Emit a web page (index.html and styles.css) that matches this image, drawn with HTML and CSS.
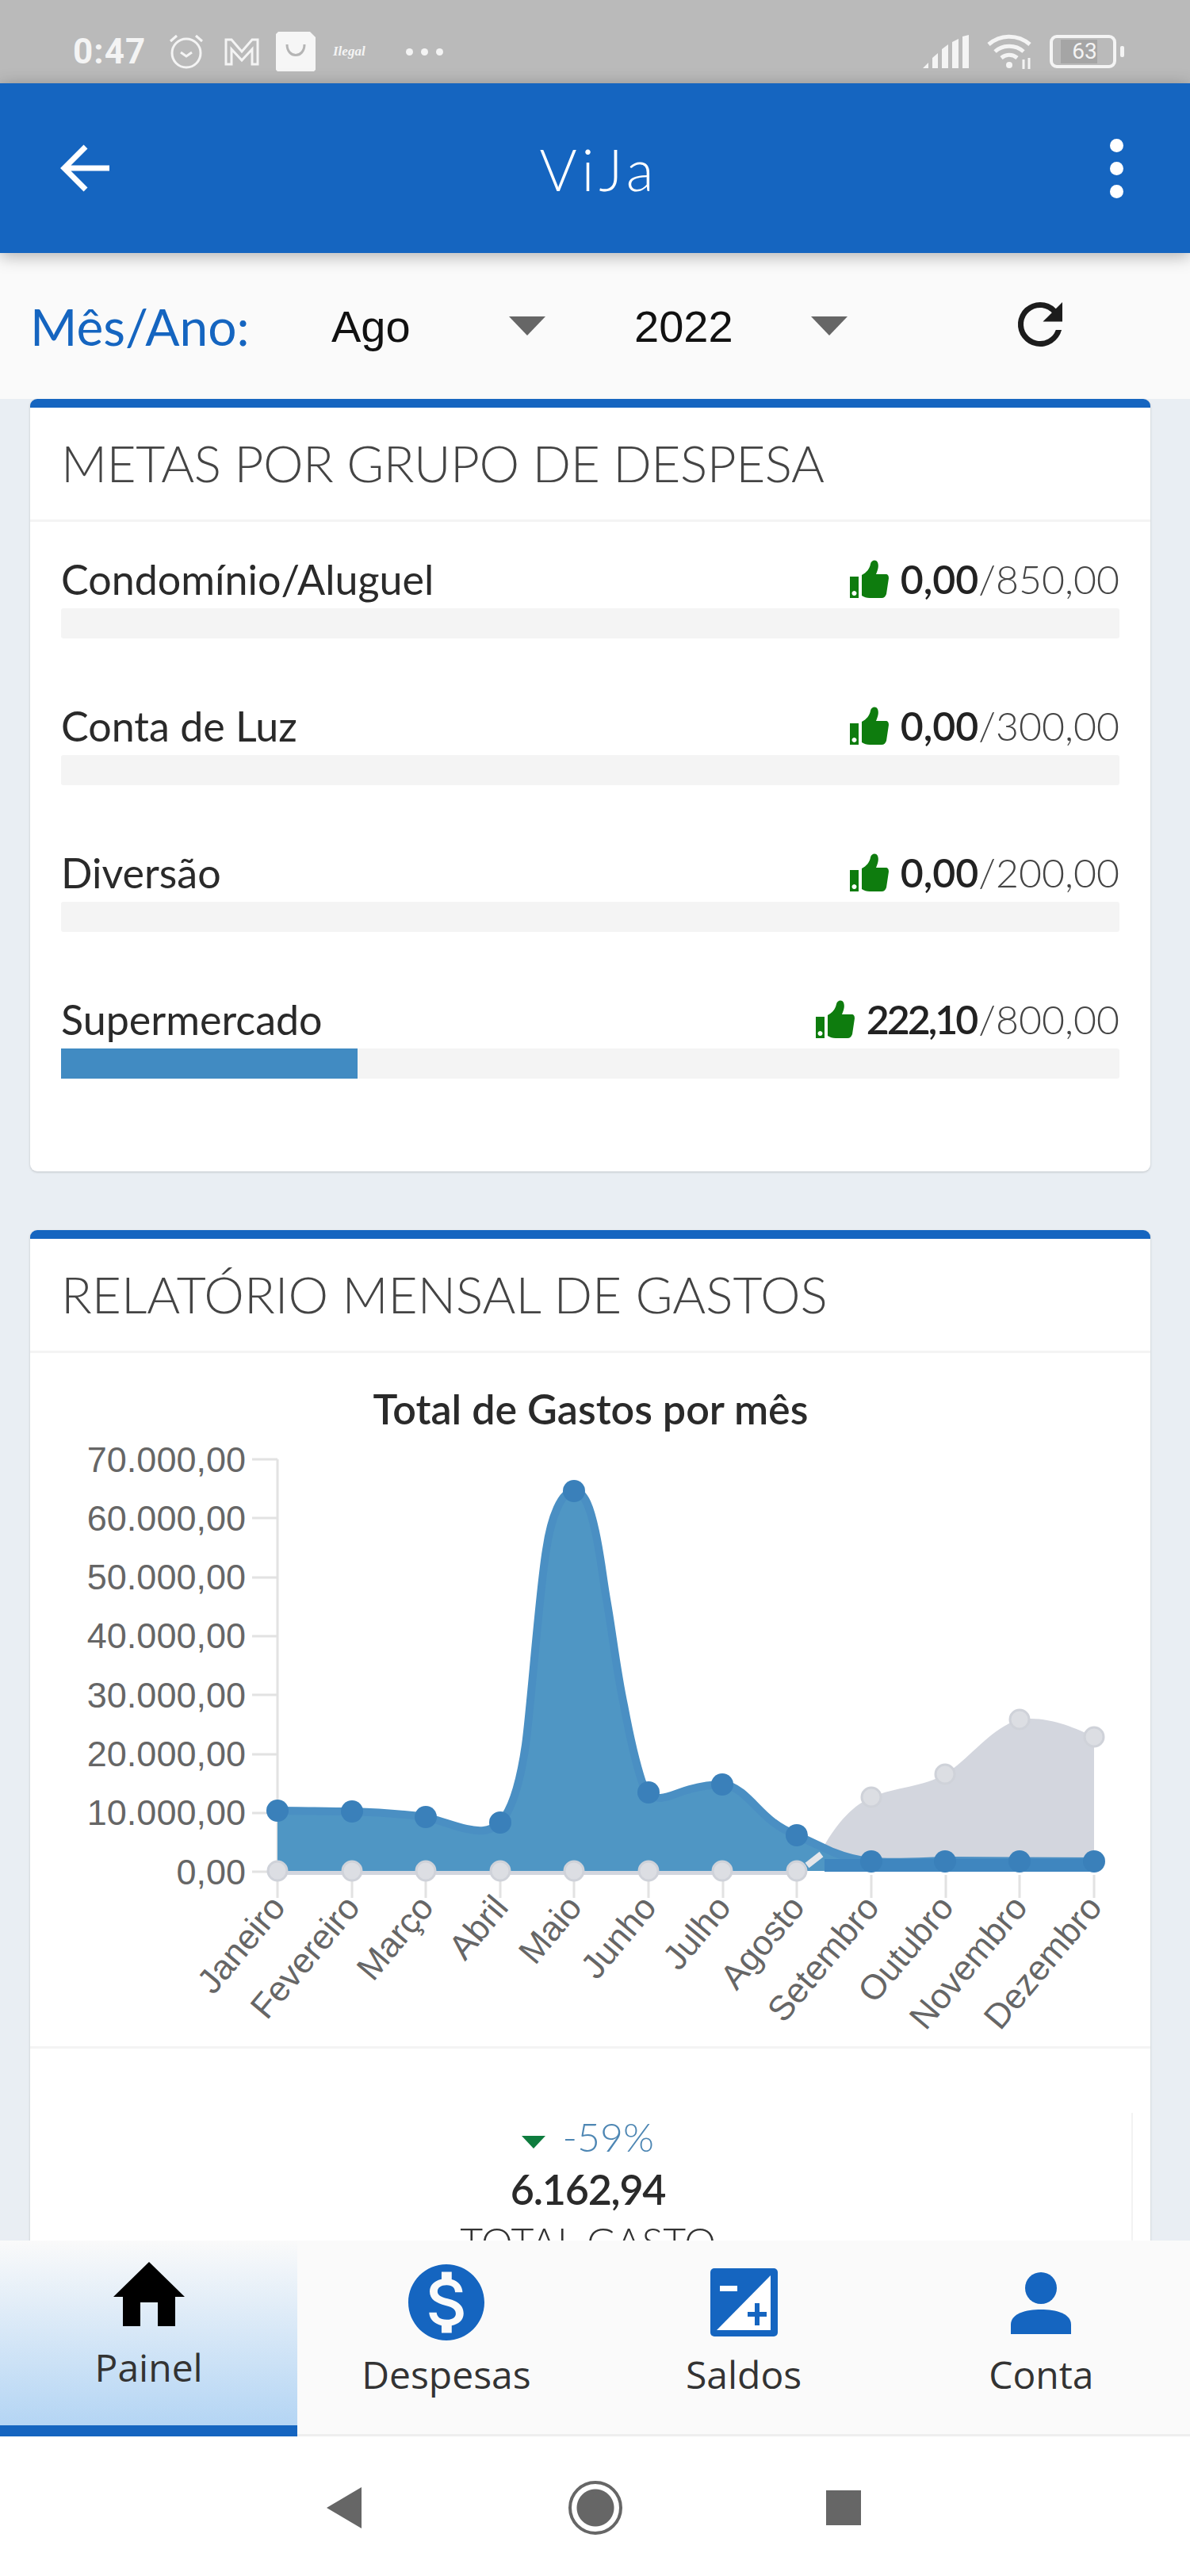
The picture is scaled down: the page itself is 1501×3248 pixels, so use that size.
FILE: index.html
```html
<!DOCTYPE html>
<html lang="pt-BR">
<head>
    <meta charset="UTF-8" />
    <meta name="viewport" content="width=device-width, initial-scale=1.0" />
    <title>ViJa</title>
    <link rel="stylesheet" href="styles.css">
</head>
<body>
<div class="phone">
    <div class="status-bar">
        <div class="status-left">
            <span class="clock">0:47</span>
            <svg class="st-alarm" viewBox="0 0 46 46"><g fill="none" stroke="#f4f4f4" stroke-width="3"><circle cx="23" cy="25" r="18"/><path d="M16 24l7 5 7-5M3 10l8-7M43 10l-8-7"/></g></svg>
            <svg class="st-mail" viewBox="0 0 46 36"><path d="M3 34V3h7l13 15L36 3h7v31h-7V15L23 29 10 15v19z" fill="none" stroke="#f4f4f4" stroke-width="3"/></svg>
            <svg class="st-bag" viewBox="0 0 50 50"><path d="M3 0h40l7 7v41l-2 2H2l-2-2V3z" fill="#f6f6f6"/><path d="M14 16c0 18 22 18 22 0" fill="none" stroke="#b5b5b5" stroke-width="3"/></svg>
            <span class="st-ilegal">Ilegal</span>
            <span class="st-dots"><i></i><i></i><i></i></span>
        </div>
        <div class="status-right">
            <svg class="st-signal" viewBox="0 0 58 42"><g fill="#f4f4f4"><path d="M0 42l7-7v7zM12 29l7-6v19h-7zM24 18l8-6v30h-8zM37 9l8-4v37h-8zM50 2l8-2v42h-8z"/></g></svg>
            <svg class="st-wifi" viewBox="0 0 58 44"><g fill="none" stroke="#f4f4f4" stroke-width="5"><path d="M3 13c15-13 37-13 52 0M11 22c10-9 26-9 36 0M19 30c6-5 14-5 20 0"/></g><circle cx="29" cy="39" r="4" fill="#f4f4f4"/><path d="M47 32v12M54 30v14" stroke="#f4f4f4" stroke-width="3"/></svg>
            <div class="st-battery"><span>63</span></div>
            <i class="st-nub"></i>
        </div>
    </div>

    <header class="app-bar">
        <svg class="bar-icon" viewBox="0 0 64 60"><path d="M62 30H6M32 3L5 30l27 27" fill="none" stroke="#fff" stroke-width="7"/></svg>
        <h1 class="app-title">ViJa</h1>
        <div class="kebab"><i></i><i></i><i></i></div>
    </header>

    <div class="content">
        <div class="filter-bar">
            <span class="filter-label">Mês/Ano:</span>
            <div class="select select-month"><span>Ago</span><i class="caret"></i></div>
            <div class="select select-year"><span>2022</span><i class="caret"></i></div>
            <svg class="refresh" viewBox="0 0 24 24"><path d="M17.65 6.35A7.96 7.96 0 0 0 12 4a8 8 0 1 0 7.73 10h-2.08A6 6 0 1 1 12 6c1.66 0 3.14.69 4.22 1.78L13 11h7V4l-2.35 2.35z" fill="#1c1c1c"/></svg>
        </div>

        <section class="card card-goals">
            <h2 class="card-title">METAS POR GRUPO DE DESPESA</h2>
            <div class="goals">
                <div class="goal">
                    <div class="goal-head">
                        <span class="goal-name">Condomínio/Aluguel</span>
                        <span class="goal-value">
                            <svg class="thumb" viewBox="0 0 50 50"><use href="#thumb-up"/></svg>
                            <b>0,00</b>/850,00
                        </span>
                    </div>
                    <div class="track"></div>
                </div>
                <div class="goal">
                    <div class="goal-head">
                        <span class="goal-name">Conta de Luz</span>
                        <span class="goal-value">
                            <svg class="thumb" viewBox="0 0 50 50"><use href="#thumb-up"/></svg>
                            <b>0,00</b>/300,00
                        </span>
                    </div>
                    <div class="track"></div>
                </div>
                <div class="goal">
                    <div class="goal-head">
                        <span class="goal-name">Diversão</span>
                        <span class="goal-value">
                            <svg class="thumb" viewBox="0 0 50 50"><use href="#thumb-up"/></svg>
                            <b>0,00</b>/200,00
                        </span>
                    </div>
                    <div class="track"></div>
                </div>
                <div class="goal">
                    <div class="goal-head">
                        <span class="goal-name">Supermercado</span>
                        <span class="goal-value">
                            <svg class="thumb" viewBox="0 0 50 50"><use href="#thumb-up"/></svg>
                            <b class="narrow">222,10</b>/800,00
                        </span>
                    </div>
                    <div class="track"><div class="track-fill" style="width: 28%"></div></div>
                </div>
            </div>
        </section>

        <section class="card card-report">
            <h2 class="card-title">RELATÓRIO MENSAL DE GASTOS</h2>
            <svg class="chart" viewBox="38 1708 1413 874">
                <text class="chart-title" x="745" y="1798">Total de Gastos por mês</text>

                <g class="axis">
                    <path d="M350 1842V2395M318 1842h32M318 1916h32M318 1991h32M318 2065h32M318 2139h32M318 2214h32M318 2288h32M318 2362h32"/>
                    <path d="M444 2366v29M537 2366v29M631 2366v29M724 2366v29M818 2366v29M912 2366v29M1005 2366v29M1099 2366v29M1193 2366v29M1286 2366v29M1380 2366v29"/>
                </g>

                <g class="y-labels">
                    <text x="310" y="1858">70.000,00</text>
                    <text x="310" y="1932">60.000,00</text>
                    <text x="310" y="2006">50.000,00</text>
                    <text x="310" y="2080">40.000,00</text>
                    <text x="310" y="2155">30.000,00</text>
                    <text x="310" y="2229">20.000,00</text>
                    <text x="310" y="2303">10.000,00</text>
                    <text x="310" y="2378">0,00</text>
                </g>

                <!-- previous year -->
                <path class="area-gray" d="M350 2361H1005C1020 2361 1030 2345 1042 2325C1060 2295 1078 2278 1099 2268C1130 2255 1165 2255 1192 2239C1225 2218 1250 2180 1286 2170C1320 2165 1355 2180 1380 2192V2361Z"/>
                <path class="line-gray" d="M350 2361H1005"/>

                <!-- current year -->
                <path class="area-blue" d="M350 2285C381 2285 412 2286 444 2286C475 2287 506 2289 537 2293C565 2300 590 2312 610 2310C622 2309 628 2302 631 2300C645 2285 656 2250 663 2202C670 2150 680 2010 689 1956C695 1915 708 1882 724 1882C738 1882 745 1905 751 1933C758 1965 760 1990 766 2024C772 2058 778 2110 787 2152C795 2195 802 2225 810 2249C813 2256 815 2260 818 2262C822 2267 827 2269 833 2269C845 2268 855 2262 870 2258C885 2254 900 2252 911 2252C920 2252 927 2256 935 2262C950 2274 962 2290 976 2300C985 2307 995 2312 1005 2316C1020 2323 1035 2330 1050 2337C1065 2343 1082 2348 1099 2349C1130 2351 1160 2349 1192 2348L1380 2349V2361H350Z"/>
                <path class="line-blue" d="M350 2285C381 2285 412 2286 444 2286C475 2287 506 2289 537 2293C565 2300 590 2312 610 2310C622 2309 628 2302 631 2300C645 2285 656 2250 663 2202C670 2150 680 2010 689 1956C695 1915 708 1882 724 1882C738 1882 745 1905 751 1933C758 1965 760 1990 766 2024C772 2058 778 2110 787 2152C795 2195 802 2225 810 2249C813 2256 815 2260 818 2262C822 2267 827 2269 833 2269C845 2268 855 2262 870 2258C885 2254 900 2252 911 2252C920 2252 927 2256 935 2262C950 2274 962 2290 976 2300C985 2307 995 2312 1005 2316C1020 2323 1035 2330 1050 2337C1065 2343 1082 2348 1099 2349C1130 2351 1160 2349 1192 2348L1380 2349"/>
                <path class="line-blue line-base" d="M1040 2354H1380"/>
                <path class="line-gap" d="M1018 2354L1036 2340"/>

                <g class="dots-blue">
                    <circle cx="350" cy="2285" r="14"/><circle cx="444" cy="2286" r="14"/><circle cx="537" cy="2293" r="14"/><circle cx="631" cy="2300" r="14"/>
                    <circle cx="724" cy="1882" r="14"/><circle cx="818" cy="2262" r="14"/><circle cx="911" cy="2252" r="14"/><circle cx="1005" cy="2316" r="14"/>
                    <circle cx="1099" cy="2349" r="14"/><circle cx="1192" cy="2349" r="14"/><circle cx="1286" cy="2349" r="14"/><circle cx="1380" cy="2349" r="14"/>
                </g>
                <g class="dots-gray">
                    <circle cx="350" cy="2361" r="12"/><circle cx="444" cy="2361" r="12"/><circle cx="537" cy="2361" r="12"/><circle cx="631" cy="2361" r="12"/>
                    <circle cx="724" cy="2361" r="12"/><circle cx="818" cy="2361" r="12"/><circle cx="911" cy="2361" r="12"/><circle cx="1005" cy="2361" r="12"/>
                    <circle cx="1099" cy="2268" r="12"/><circle cx="1192" cy="2239" r="12"/><circle cx="1286" cy="2170" r="12"/><circle cx="1380" cy="2192" r="12"/>
                </g>

                <g class="x-labels">
                    <text transform="translate(362 2408) rotate(-50)">Janeiro</text>
                    <text transform="translate(456 2408) rotate(-50)">Fevereiro</text>
                    <text transform="translate(549 2408) rotate(-50)">Março</text>
                    <text transform="translate(643 2408) rotate(-50)">Abril</text>
                    <text transform="translate(736 2408) rotate(-50)">Maio</text>
                    <text transform="translate(830 2408) rotate(-50)">Junho</text>
                    <text transform="translate(924 2408) rotate(-50)">Julho</text>
                    <text transform="translate(1017 2408) rotate(-50)">Agosto</text>
                    <text transform="translate(1111 2408) rotate(-50)">Setembro</text>
                    <text transform="translate(1205 2408) rotate(-50)">Outubro</text>
                    <text transform="translate(1298 2408) rotate(-50)">Novembro</text>
                    <text transform="translate(1392 2408) rotate(-50)">Dezembro</text>
                </g>
            </svg>

            <div class="totals">
                <div class="total-box">
                    <div class="total-diff"><i class="diff-caret"></i> -59%</div>
                    <div class="total-value">6.162,94</div>
                    <div class="total-label">TOTAL GASTO</div>
                </div>
            </div>
        </section>
    </div>

    <nav class="tabs">
        <a class="tab tab-active">
            <svg class="tab-icon icon-home" viewBox="0 0 90 81"><path d="M45 0L90 44H78V81H56V51H34V81H12V44H0z" fill="#000"/></svg>
            <span>Painel</span>
        </a>
        <a class="tab">
            <svg class="tab-icon icon-money" viewBox="0 0 24 24"><path d="M12 2C6.48 2 2 6.48 2 12s4.48 10 10 10 10-4.48 10-10S17.52 2 12 2zm1.41 16.09V20h-2.67v-1.93c-1.71-.36-3.16-1.46-3.27-3.4h1.96c.1 1.05.82 1.87 2.65 1.87 1.96 0 2.4-.98 2.4-1.59 0-.83-.44-1.61-2.67-2.14-2.48-.6-4.18-1.62-4.18-3.67 0-1.72 1.39-2.84 3.11-3.21V4h2.67v1.95c1.86.45 2.79 1.86 2.85 3.39H14.3c-.05-1.11-.64-1.87-2.22-1.87-1.5 0-2.4.68-2.4 1.64 0 .84.65 1.39 2.67 1.91s4.18 1.39 4.18 3.91c-.01 1.83-1.38 2.83-3.12 3.16z" fill="#1565c0" transform="translate(-2.4 -2.4) scale(1.2)"/></svg>
            <span>Despesas</span>
        </a>
        <a class="tab">
            <svg class="tab-icon icon-saldo" viewBox="0 0 85 86"><rect width="85" height="86" rx="5" fill="#1565c0"/><path d="M76 9V78H8z" fill="#fff"/><path d="M12 22h22v7H12z" fill="#fff"/><path d="M47 55h24v6H47zM56 44h6v28h-6z" fill="#1565c0"/></svg>
            <span>Saldos</span>
        </a>
        <a class="tab">
            <svg class="tab-icon icon-user" viewBox="0 0 76 78"><circle cx="38" cy="20" r="20" fill="#1565c0"/><path d="M0 78V66c0-14 19-19 38-19s38 5 38 19v12z" fill="#1565c0"/></svg>
            <span>Conta</span>
        </a>
    </nav>

    <div class="android-nav">
        <i class="nav-back"></i>
        <i class="nav-home"></i>
        <i class="nav-square"></i>
    </div>
</div>

<svg class="defs" width="0" height="0">
    <symbol id="thumb-up" viewBox="0 0 50 50">
        <path d="M1 22h11v27H1z M6.500 40a3 3 0 1 0 .01 0z" fill="#0e7c0e" fill-rule="evenodd"/>
        <path d="M16 20c6-3 10-8 11-14 1-5 7-6 9-2 2 5 0 10-2 15h12c3 0 4 2 4 5l-3 20c-1 3-3 5-6 5H26c-4 0-7-1-10-3z" fill="#0e7c0e"/>
    </symbol>
</svg>
</body>
</html>
```

FILE: styles.css
```css
* {
    box-sizing: border-box;
}
html, body {
    margin: 0;
    padding: 0;
}
body {
    width: 1501px;
    height: 3248px;
    overflow: hidden;
    font-family: "Lato", "Open Sans", sans-serif;
    color: #333;
    background: #e9eef3;
}
.phone {
    width: 1501px;
    height: 3248px;
    display: flex;
    flex-direction: column;
    position: relative;
}
.defs {
    position: absolute;
}

/* status bar */
.status-bar {
    height: 105px;
    flex: none;
    background: #bababa;
    display: flex;
    justify-content: space-between;
    align-items: flex-start;
    padding: 40px 83px 0 92px;
}
.status-left, .status-right {
    display: flex;
    align-items: center;
    height: 50px;
}
.clock {
    font-family: "Roboto", sans-serif;
    font-weight: 700;
    font-size: 44px;
    letter-spacing: 1px;
    color: #f4f4f4;
    width: 120px;
}
.st-alarm {
    width: 46px;
    height: 46px;
    margin-right: 24px;
}
.st-mail {
    width: 46px;
    height: 36px;
    margin-right: 20px;
}
.st-bag {
    width: 50px;
    height: 50px;
    margin-right: 22px;
}
.st-ilegal {
    font-family: "Liberation Serif", serif;
    font-style: italic;
    font-weight: 700;
    font-size: 17px;
    color: #f4f4f4;
    width: 47px;
}
.st-dots {
    display: flex;
    gap: 10px;
    margin-left: 45px;
}
.st-dots i {
    width: 9px;
    height: 9px;
    border-radius: 50%;
    background: #f4f4f4;
}
.st-signal {
    width: 58px;
    height: 42px;
    margin-right: 22px;
}
.st-wifi {
    width: 58px;
    height: 44px;
    margin-right: 22px;
}
.st-battery {
    width: 84px;
    height: 42px;
    border: 4px solid #f4f4f4;
    border-radius: 9px;
    display: flex;
    align-items: center;
    justify-content: center;
}
.st-battery span {
    background: #a5a5a5;
    margin-left: -10px;
    padding-left: 14px;
    font-family: "Roboto", sans-serif;
    font-size: 28px;
    line-height: 30px;
    color: #f4f4f4;
}
.st-nub {
    width: 5px;
    height: 14px;
    margin-left: 5px;
    background: #f4f4f4;
    border-radius: 2px;
}

/* app bar */
.app-bar {
    height: 214px;
    flex: none;
    background: #1565c0;
    box-shadow: 0 4px 20px rgba(0, 0, 0, 0.3);
    display: grid;
    grid-template-columns: 64px 1fr 64px;
    align-items: center;
    padding: 0 84px 0 76px;
    position: relative;
    z-index: 2;
}
.bar-icon {
    width: 64px;
    height: 60px;
}
.app-title {
    margin: 2px 0 0 18px;
    text-align: center;
    font-family: "Lato", sans-serif;
    font-weight: 300;
    font-size: 72px;
    letter-spacing: 6px;
    color: #fff;
}
.kebab {
    display: flex;
    flex-direction: column;
    align-items: flex-end;
    gap: 12px;
}
.kebab i {
    width: 17px;
    height: 17px;
    border-radius: 50%;
    background: #fff;
}

/* content */
.content {
    flex: 1;
    min-height: 0;
    overflow: hidden;
}
.filter-bar {
    height: 184px;
    background: #fafafa;
    display: flex;
    align-items: center;
    padding: 0 0 0 38px;
}
.filter-label {
    font-family: "Lato", sans-serif;
    font-size: 64px;
    color: #1565c0;
    width: 380px;
    flex: none;
}
.select {
    flex: none;
    display: flex;
    align-items: center;
    font-family: "Liberation Sans", sans-serif;
    font-size: 56px;
    color: #111;
}
.select-month {
    width: 382px;
}
.select-year {
    width: 440px;
}
.select-month span {
    width: 224px;
}
.select-year span {
    width: 223px;
}
.caret {
    width: 0;
    height: 0;
    border-left: 23px solid transparent;
    border-right: 23px solid transparent;
    border-top: 24px solid #666;
}
.refresh {
    width: 84px;
    height: 84px;
    margin: -4px 0 0 30px;
}

.card {
    margin: 0 50px 0 38px;
    background: #fff;
    border-top: 11px solid #1565c0;
    border-radius: 9px;
    box-shadow: 0 1px 3px rgba(0, 0, 0, 0.18);
}
.card-goals {
    height: 974px;
    margin-bottom: 74px;
}
.card-title {
    margin: 0;
    height: 144px;
    padding-left: 39px;
    line-height: 140px;
    font-family: "Lato", sans-serif;
    font-weight: 300;
    font-size: 64px;
    color: #444;
    border-bottom: 3px solid #f4f4f4;
}
.card-goals .card-title {
    letter-spacing: -0.5px;
}
.goals {
    padding: 42px 39px 0 39px;
    display: flex;
    flex-direction: column;
    gap: 80px;
}
.goal-head {
    height: 67px;
    display: flex;
    justify-content: space-between;
    align-items: flex-start;
}
.goal-name {
    font-size: 52px;
    line-height: 60px;
    font-weight: 400;
    color: #2a2a2a;
}
.goal-value {
    display: flex;
    align-items: center;
    font-size: 50px;
    line-height: 60px;
    font-weight: 300;
    color: #444;
}
.goal-value b {
    font-weight: 600;
    color: #222;
}
.goal-value .narrow {
    letter-spacing: -3px;
    margin-right: 3px;
}
.thumb {
    width: 50px;
    height: 50px;
    margin-right: 15px;
}
.track {
    height: 38px;
    background: #f4f4f4;
    border-radius: 3px;
}
.track-fill {
    height: 100%;
    background: #418bc2;
}

/* chart */
.chart {
    display: block;
    width: 1413px;
    height: 874px;
}
.chart-title {
    font-family: "Lato", sans-serif;
    font-weight: 600;
    font-size: 52px;
    text-anchor: middle;
    fill: #2a2a2a;
}
.axis path {
    fill: none;
    stroke: #e2e2e2;
    stroke-width: 3;
}
.y-labels text {
    font-family: "Liberation Sans", sans-serif;
    font-size: 45px;
    text-anchor: end;
    fill: #666;
}
.x-labels text {
    font-family: "Liberation Sans", sans-serif;
    font-size: 44px;
    text-anchor: end;
    fill: #666;
}
.area-gray {
    fill: #d3d6de;
}
.line-gray {
    fill: none;
    stroke: #d3d6de;
    stroke-width: 10;
}
.area-blue {
    fill: #4f96c4;
}
.line-blue {
    fill: none;
    stroke: #4a8fc3;
    stroke-width: 10;
}
.line-base {
    stroke-width: 16;
    stroke: #3f86bf;
}
.line-gap {
    stroke: #e4e6ea;
    stroke-width: 8;
}
.dots-blue circle {
    fill: #3a80ba;
}
.dots-gray circle {
    fill: #dcdee3;
    stroke: #cfd2d9;
    stroke-width: 3;
}

/* totals */
.totals {
    border-top: 3px solid #f4f4f4;
    padding: 81px 22px 0 0;
}
.total-box {
    border-right: 2px solid #f2f2f2;
    text-align: center;
    padding-left: 18px;
}
.total-diff {
    font-size: 50px;
    line-height: 60px;
    font-weight: 300;
    color: #4d86b3;
}
.diff-caret {
    display: inline-block;
    vertical-align: middle;
    width: 0;
    height: 0;
    margin-right: 8px;
    border-left: 15px solid transparent;
    border-right: 15px solid transparent;
    border-top: 16px solid #0e7c3e;
}
.total-value {
    font-size: 52px;
    line-height: 72px;
    font-weight: 600;
    letter-spacing: -1.2px;
    color: #2a2a2a;
}
.total-label {
    font-size: 50px;
    line-height: 60px;
    font-weight: 300;
    color: #333;
}

/* tabs */
.tabs {
    height: 247px;
    flex: none;
    display: grid;
    grid-template-columns: repeat(4, 375.25px);
    background: #fafafa;
    border-bottom: 3px solid #eee;
    position: relative;
    z-index: 1;
}
.tab {
    display: flex;
    flex-direction: column;
    align-items: center;
    font-family: "Open Sans", sans-serif;
    font-size: 48px;
    color: #333;
    padding-top: 31px;
    position: relative;
}
.tab span {
    line-height: 60px;
    margin-top: 14px;
}
.tab-active {
    background: linear-gradient(#fafafa, #b4d5f4);
    border-bottom: 14px solid #1565c0;
    margin-bottom: -3px;
    padding-top: 27px;
}
.tab-active span {
    margin-top: 22px;
}
.tab-icon {
    display: block;
    height: 90px;
}
.icon-home {
    width: 90px;
    height: 81px;
}
.icon-money {
    width: 96px;
    height: 96px;
    margin-top: -1px;
}
.icon-money + span {
    margin-top: 13px;
}
.icon-saldo {
    width: 85px;
    height: 86px;
    margin-top: 4px;
}
.icon-saldo + span {
    margin-top: 18px;
}
.icon-user {
    width: 76px;
    height: 78px;
    margin-top: 9px;
}
.icon-user + span {
    margin-top: 21px;
}

/* android nav */
.android-nav {
    height: 176px;
    flex: none;
    background: #fff;
    display: flex;
    align-items: center;
    padding: 4px 0 0 412px;
}
.nav-back {
    width: 0;
    height: 0;
    border-top: 26px solid transparent;
    border-bottom: 26px solid transparent;
    border-right: 44px solid #666;
    margin-right: 261px;
}
.nav-home {
    width: 68px;
    height: 68px;
    border-radius: 50%;
    border: 4px solid #666;
    background: radial-gradient(circle, #666 0, #666 23px, #fff 24px);
    margin-right: 257px;
}
.nav-square {
    width: 44px;
    height: 44px;
    background: #666;
}
```
